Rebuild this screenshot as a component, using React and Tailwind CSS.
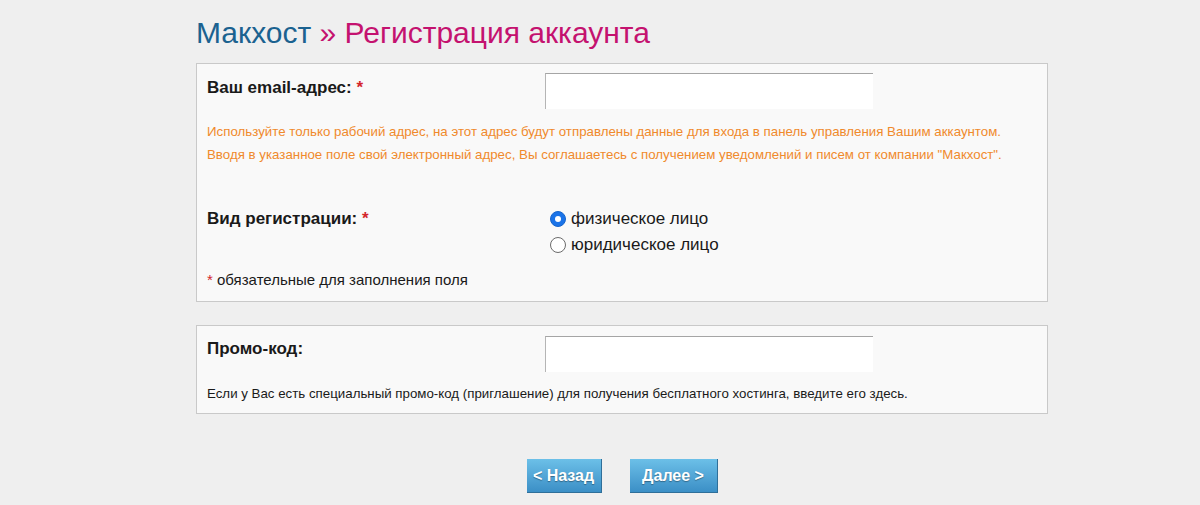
import React from "react";

const font = { fontFamily: '"Liberation Sans", Arial, sans-serif' };

function Radio({ checked }) {
  return checked ? (
    <span className="inline-flex h-[16px] w-[16px] items-center justify-center rounded-full bg-[#1a73e8] border border-[#1665cc]">
      <span className="h-[6px] w-[6px] rounded-full bg-white" />
    </span>
  ) : (
    <span className="inline-block h-[16px] w-[16px] rounded-full border border-[#6b6b6b] bg-white" />
  );
}

export default function App() {
  return (
    <div className="min-h-[505px] w-full bg-[#efefef]" style={font}>
      <div className="ml-[196px] w-[852px] pt-[15px]">
        <h1 className="text-[30px] leading-[36px] font-normal">
          <span className="text-[#1b6290]">Макхост</span>
          <span className="text-[#c4126f]"> » Регистрация аккаунта</span>
        </h1>

        <div className="mt-[12px] border border-[#c9c9c9] bg-[#f9f9f9] pl-[10px] pr-[10px] pt-[9px] pb-[12px]">
          <div className="flex items-start">
            <div className="w-[338px] pt-[5px] text-[17px] leading-[20px] font-bold text-[#1a1a1a]">
              Ваш email-адрес: <span className="text-[#d4262c]">*</span>
            </div>
            <div className="h-[36px] w-[328px] border-t border-l border-t-[#a5a5a5] border-l-[#b5b5b5] bg-white" />
          </div>
          <div className="mt-[11px] text-[13.3px] leading-[23px] text-[#f08a2c]">
            <div>Используйте только рабочий адрес, на этот адрес будут отправлены данные для входа в панель управления Вашим аккаунтом.</div>
            <div>Вводя в указанное поле свой электронный адрес, Вы соглашаетесь с получением уведомлений и писем от компании "Макхост".</div>
          </div>
          <div className="mt-[43px] flex items-start">
            <div className="w-[343px] text-[17px] leading-[20px] font-bold text-[#1a1a1a]">
              Вид регистрации: <span className="text-[#d4262c]">*</span>
            </div>
            <div className="flex flex-col gap-[6px] text-[17px] text-[#1a1a1a]">
              <label className="flex items-center gap-[5px] leading-[20px]"><Radio checked /> физическое лицо</label>
              <label className="flex items-center gap-[5px] leading-[20px]"><Radio /> юридическое лицо</label>
            </div>
          </div>
          <div className="mt-[16px] text-[15px] leading-[18px] text-[#1a1a1a]">
            <span className="text-[#d4262c]">*</span> обязательные для заполнения поля
          </div>
        </div>

        <div className="mt-[23px] border border-[#c9c9c9] bg-[#f9f9f9] pl-[10px] pr-[10px] pt-[10px] pb-[11px]">
          <div className="flex items-start">
            <div className="w-[338px] pt-[3px] text-[17px] leading-[20px] font-bold text-[#1a1a1a]">Промо-код:</div>
            <div className="h-[36px] w-[328px] border-t border-l border-t-[#a5a5a5] border-l-[#b5b5b5] bg-white" />
          </div>
          <div className="mt-[13px] text-[13.3px] leading-[17px] text-[#1a1a1a]">
            Если у Вас есть специальный промо-код (приглашение) для получения бесплатного хостинга, введите его здесь.
          </div>
        </div>

        <div className="mt-[45px] flex justify-center gap-[28px]">
          <button className="h-[34px] w-[75px] bg-gradient-to-b from-[#6cc0e8] to-[#3b8fc6] border-b border-r border-[#2f6f99] text-[16px] font-bold text-white [text-shadow:0_1px_1px_rgba(0,0,0,0.35)]">
            &lt; Назад
          </button>
          <button className="h-[34px] w-[88px] bg-gradient-to-b from-[#6cc0e8] to-[#3b8fc6] border-b border-r border-[#2f6f99] text-[16px] font-bold text-white [text-shadow:0_1px_1px_rgba(0,0,0,0.35)]">
            Далее &gt;
          </button>
        </div>
      </div>
    </div>
  );
}
